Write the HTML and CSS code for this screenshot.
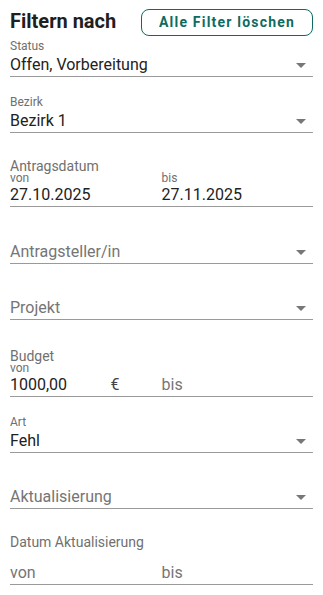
FILE: index.html
```html
<!DOCTYPE html>
<html lang="de">
<head>
    <meta charset="UTF-8">
    <meta name="viewport" content="width=device-width, initial-scale=1.0">
    <title>Filter</title>
    <link rel="stylesheet" href="styles.css">
</head>
<body>
    <div class="filters">
        <div class="filters-header">
            <h2 class="filters-title">Filtern nach</h2>
            <button class="btn-outline">Alle Filter löschen</button>
        </div>

        <div class="field">
            <div class="field-label">Status</div>
            <div class="field-control">
                <span class="field-value">Offen, Vorbereitung</span>
                <span class="arrow"></span>
            </div>
        </div>

        <div class="field">
            <div class="field-label">Bezirk</div>
            <div class="field-control">
                <span class="field-value">Bezirk 1</span>
                <span class="arrow"></span>
            </div>
        </div>

        <div class="field field-range">
            <div class="range-label">Antragsdatum</div>
            <div class="range">
                <div class="range-col">
                    <div class="range-sub">von</div>
                    <div class="field-control"><span class="field-value">27.10.2025</span></div>
                </div>
                <div class="range-col">
                    <div class="range-sub">bis</div>
                    <div class="field-control"><span class="field-value">27.11.2025</span></div>
                </div>
            </div>
        </div>

        <div class="field field-after-range">
            <div class="field-label"></div>
            <div class="field-control">
                <span class="placeholder">Antragsteller/in</span>
                <span class="arrow"></span>
            </div>
        </div>

        <div class="field">
            <div class="field-label"></div>
            <div class="field-control">
                <span class="placeholder">Projekt</span>
                <span class="arrow"></span>
            </div>
        </div>

        <div class="field field-range field-budget">
            <div class="range-label">Budget</div>
            <div class="range">
                <div class="range-col">
                    <div class="range-sub">von</div>
                    <div class="field-control">
                        <span class="field-value">1000,00</span>
                        <span class="suffix">€</span>
                    </div>
                </div>
                <div class="range-col">
                    <div class="range-sub"></div>
                    <div class="field-control"><span class="placeholder">bis</span></div>
                </div>
            </div>
        </div>

        <div class="field field-after-range">
            <div class="field-label">Art</div>
            <div class="field-control">
                <span class="field-value">Fehl</span>
                <span class="arrow"></span>
            </div>
        </div>

        <div class="field">
            <div class="field-label"></div>
            <div class="field-control">
                <span class="placeholder">Aktualisierung</span>
                <span class="arrow"></span>
            </div>
        </div>

        <div class="field field-dates">
            <div class="dates-label">Datum Aktualisierung</div>
            <div class="range">
                <div class="field-control"><span class="placeholder">von</span></div>
                <div class="field-control"><span class="placeholder">bis</span></div>
            </div>
        </div>
    </div>
</body>
</html>
```

FILE: styles.css
```css
body {
    margin: 0;
    padding: 0 10px;
    background-color: #ffffff;
    font-family: Roboto, "Noto Sans", sans-serif;
    color: #212121;
}

.filters-header {
    display: flex;
    justify-content: space-between;
    align-items: flex-start;
    height: 39px;
}

.filters-title {
    margin: 9px 0 0;
    font-size: 20px;
    line-height: 24px;
    font-weight: 700;
    color: #1f1f1f;
}

.btn-outline {
    margin-top: 9px;
    height: 27px;
    box-sizing: border-box;
    padding: 0 17px;
    border: 1px solid #0e6b62;
    border-radius: 8px;
    background: #ffffff;
    color: #0e6b62;
    font-family: inherit;
    font-size: 14px;
    line-height: 25px;
    font-weight: 700;
    letter-spacing: 1.2px;
    cursor: pointer;
}

/* einfache Felder: Label + Zeile mit Unterstrich */
.field {
    margin-top: 18px;
}

.filters-header + .field {
    margin-top: 0;
}

.field-label {
    height: 15px;
    font-size: 12px;
    line-height: 15px;
    color: #6f6f6f;
}

.field-control {
    display: flex;
    align-items: center;
    height: 22px;
    font-size: 16px;
    line-height: 22px;
    border-bottom: 1px solid #9a9a9a;
}

.field-value {
    color: #222222;
}

.placeholder {
    color: #757575;
}

.arrow {
    margin-left: auto;
    margin-right: 7px;
    width: 0;
    height: 0;
    border-left: 5px solid transparent;
    border-right: 5px solid transparent;
    border-top: 5px solid #777777;
}

.suffix {
    margin-left: auto;
    margin-right: 42px;
    color: #444444;
}

/* Bereichsfelder (von / bis) */
.field-range {
    margin-top: 27px;
}

.field-budget {
    margin-top: 30px;
}

.field-after-range {
    margin-top: 18px;
}

.field-range + .field-after-range {
    margin-top: 19px;
}

.field-budget + .field-after-range {
    margin-top: 18px;
}

.range-label {
    height: 12px;
    font-size: 14px;
    line-height: 12px;
    color: #707070;
}

.range {
    display: grid;
    grid-template-columns: 1fr 1fr;
}

.range-sub {
    height: 12px;
    font-size: 12px;
    line-height: 12px;
    color: #6f6f6f;
}

.field-dates {
    margin-top: 25px;
}

.dates-label {
    height: 16px;
    margin-bottom: 12px;
    font-size: 14px;
    line-height: 16px;
    color: #707070;
}
```
